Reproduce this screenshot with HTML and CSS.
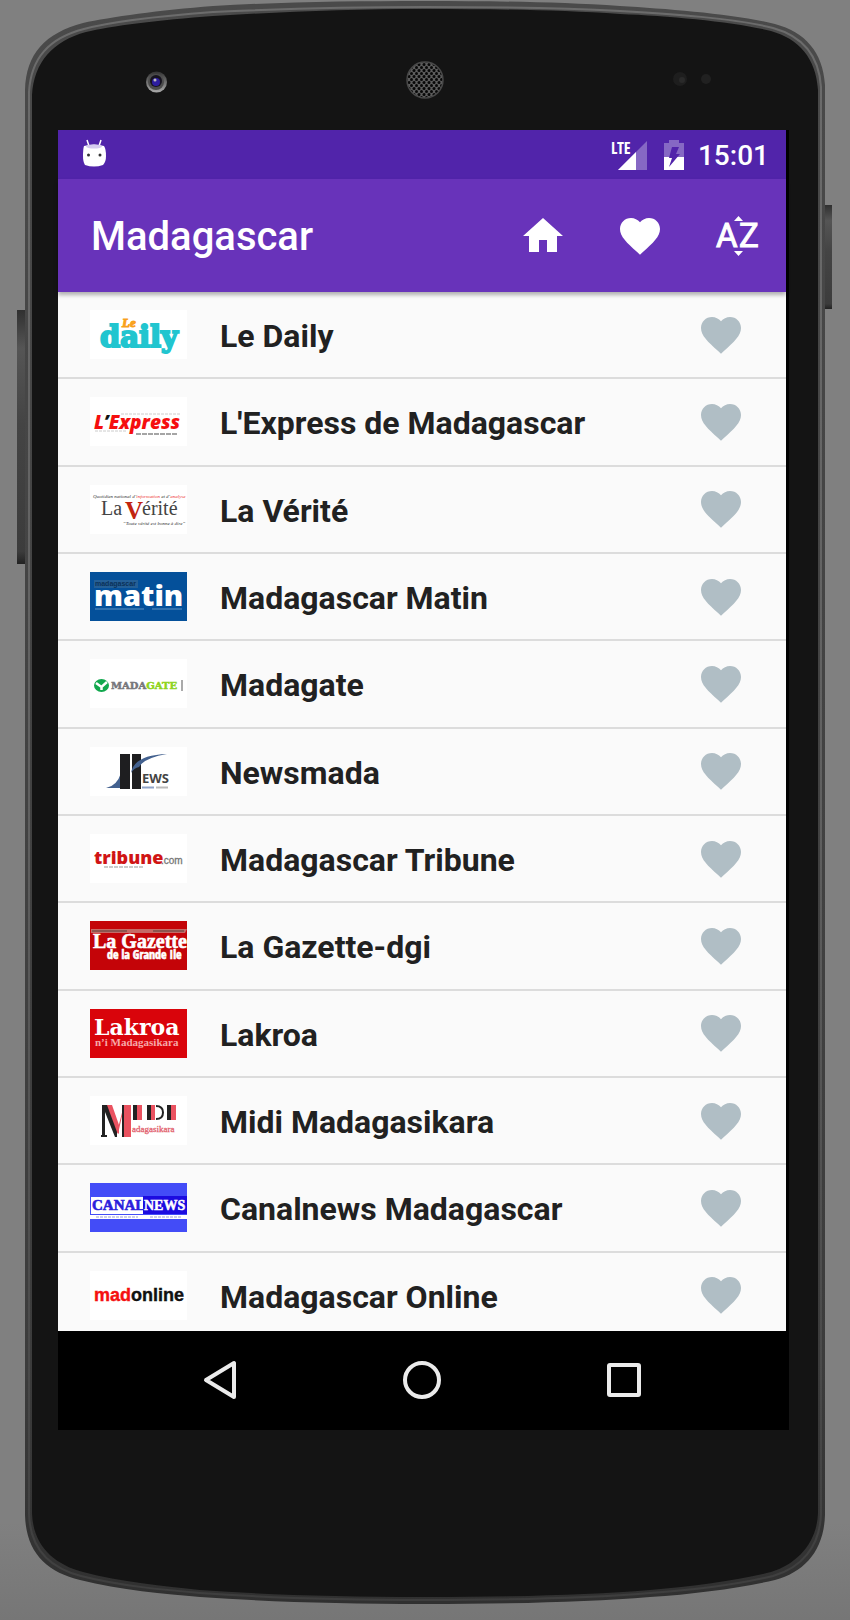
FILE: index.html
```html
<!DOCTYPE html>
<html lang="en">
<head>
<meta charset="utf-8">
<meta name="viewport" content="width=device-width, initial-scale=1">
<title>Madagascar</title>
<link rel="stylesheet" href="styles.css">
</head>
<body>
<svg class="defs" aria-hidden="true">
  <defs>
    <symbol id="heart" viewBox="0 0 24 24"><path d="M12 21.35l-1.45-1.32C5.4 15.36 2 12.28 2 8.5 2 5.42 4.42 3 7.5 3c1.74 0 3.41.81 4.5 2.09C13.09 3.81 14.76 3 16.5 3 19.58 3 22 5.42 22 8.5c0 3.78-3.4 6.86-8.55 11.54L12 21.35z" fill="currentColor"/></symbol>
  </defs>
</svg>
<div class="phone">
  <svg class="phone-body" viewBox="0 0 850 1620" preserveAspectRatio="none" aria-hidden="true">
    <defs>
      <linearGradient id="rim" x1="0" y1="0" x2="0" y2="1">
        <stop offset="0" stop-color="#4a4a4a"/><stop offset=".85" stop-color="#3c3c3c"/><stop offset="1" stop-color="#303030"/>
      </linearGradient>
      <linearGradient id="edge" x1="0" y1="0" x2="0" y2="1">
        <stop offset="0" stop-color="#6c6c6c"/><stop offset=".5" stop-color="#606060"/><stop offset=".85" stop-color="#4a4a4a"/><stop offset="1" stop-color="#3e3e3e"/>
      </linearGradient>
      <linearGradient id="key" x1="0" y1="0" x2="0" y2="1">
        <stop offset="0" stop-color="#303030"/><stop offset=".15" stop-color="#555"/><stop offset=".45" stop-color="#444"/><stop offset=".95" stop-color="#3c3c3c"/><stop offset="1" stop-color="#222"/>
      </linearGradient>
      <linearGradient id="lens" x1="0" y1="0" x2="0" y2="1">
        <stop offset="0" stop-color="#333"/><stop offset="1" stop-color="#aaa"/>
      </linearGradient>
      <pattern id="mesh" width="5" height="6" patternUnits="userSpaceOnUse">
        <rect width="5" height="6" fill="#5c5c5c"/>
        <circle cx="1.5" cy="1.5" r="1.5" fill="#080808"/><circle cx="4" cy="4.5" r="1.5" fill="#080808"/><circle cx="-1" cy="4.5" r="1.5" fill="#080808"/>
      </pattern>
      <linearGradient id="wall" x1="0" y1="0" x2="0" y2="1">
        <stop offset="0" stop-color="#808080"/><stop offset=".94" stop-color="#808080"/><stop offset="1" stop-color="#767676"/>
      </linearGradient>
    </defs>
    <rect width="850" height="1620" fill="url(#wall)"/>
    <rect x="17" y="310" width="10" height="254" fill="url(#key)"/>
    <rect x="824" y="205" width="8" height="104" fill="url(#key)"/>
    <path d="M425 1C350 1 280 2 213 6C160 10 110 17 83 23C45 33 26 54 25 90V1515C26 1553 47 1572 80 1580C120 1590 165 1594 200 1597C270 1602 340 1604 425 1604S590 1602 650 1597C695 1594 740 1588 775 1580C805 1572 824 1550 825 1515V85C823 52 805 32 775 24C735 14 670 9 620 6C560 2 500 1 425 1Z" fill="url(#rim)"/>
    <path d="M425 7C350 7 280 9 213 12C160 16 110 22 84 29C49 38 31 58 29 92V1514C30 1549 50 1568 81 1576C120 1586 165 1590 200 1593C270 1598 340 1600 425 1600S590 1598 650 1593C695 1590 740 1584 773 1576C801 1568 820 1547 821 1514V87C819 55 802 36 773 28C735 18 670 14 620 11C560 8 500 7 425 7Z" fill="none" stroke="url(#edge)" stroke-width="2"/>
    <path d="M425 9C350 9 280 12 213 16C160 20 110 26 86 32C53 41 34 62 32 95V1513C33 1545 53 1564 83 1572C120 1582 165 1586 200 1590C270 1595 340 1597 425 1597S590 1595 650 1590C695 1586 740 1580 771 1572C797 1564 817 1543 818 1513V90C816 58 799 39 771 31C735 22 670 16 620 14C560 10 500 9 425 9Z" fill="#141414"/>
    <circle cx="156.500" cy="82" r="10.500" fill="url(#lens)"/>
    <circle cx="156" cy="82" r="8" fill="#4c4c4c"/>
    <circle cx="156" cy="81" r="6" fill="#16131f"/>
    <circle cx="156" cy="82" r="4" fill="#2d1da0"/>
    <circle cx="155" cy="80" r="1.5" fill="#bbb"/>
    <circle cx="425" cy="80" r="18" fill="url(#mesh)" stroke="#484848" stroke-width="1.5"/>
    <circle cx="680" cy="79" r="7" fill="#1e1e1e"/>
    <circle cx="682" cy="80" r="3" fill="#2a2a2a"/>
    <circle cx="706" cy="79" r="5" fill="#212121"/>
  </svg>
  <div class="screen">
    <div class="status-bar">
      <svg class="robot" viewBox="0 0 24 28" aria-hidden="true">
        <path d="M5 1l2 6M19 1l-2 6" stroke="#fff" stroke-width="1.5"/>
        <path d="M2 7Q12 4 22 7Q24 10 24 17Q24 23 21 26Q12 29 3 26Q1 23 1 17Q1 10 2 7Z" fill="#fff"/>
        <ellipse cx="12" cy="7.5" rx="8" ry="2" fill="#d6ccef"/>
        <circle cx="6.500" cy="16" r="1.5" fill="#333"/><circle cx="18" cy="16" r="1.5" fill="#333"/>
      </svg>
      <svg class="signal" viewBox="0 0 40 34" role="img" aria-label="LTE">
        <path d="M11 32L40 3V32Z" fill="#8668c4"/><path d="M11 32L29 14V32Z" fill="#fff"/>
        <text x="4" y="16" class="lte">LTE</text>
      </svg>
      <svg class="battery" viewBox="0 0 20 30" aria-hidden="true">
        <path d="M5 0H15V3H20V17H0V3H5Z" fill="#8668c4"/><path d="M0 17H20V30H0Z" fill="#fff"/>
        <path d="M8 7H15L12 14H16L5 27L8 18H5Z" fill="#5124aa"/>
      </svg>
      <time class="clock">15:01</time>
    </div>
    <header class="toolbar">
      <h1 class="title">Madagascar</h1>
      <button class="tool" aria-label="Home"><svg class="icon" viewBox="0 0 24 24"><path d="M10 20v-6h4v6h5v-8h3L12 3 2 12h3v8z" fill="currentColor"/></svg></button>
      <button class="tool" aria-label="Favourites"><svg class="icon"><use href="#heart"/></svg></button>
      <button class="tool" aria-label="Sort A to Z"><svg class="icon" viewBox="0 0 48 48"><path d="M21 9L25.500 4L30 9ZM21 39L25.500 44L30 39Z" fill="currentColor"/><text x="3" y="35" class="az">A</text><text x="26" y="35" class="az">Z</text></svg></button>
    </header>
    <main class="scroller">
      <ul class="papers">
        <li class="paper">
          <svg class="logo" viewBox="0 0 97 49" aria-hidden="true"><rect width="97" height="49" fill="#fff"/><text x="10" y="37" class="slab" font-size="29" fill="#21c5cf" stroke="#21c5cf" stroke-width="2">daily</text><text x="32" y="17" class="serif-i" font-size="13" fill="#f9a11b" stroke="#f9a11b">Le</text></svg>
          <span class="name">Le Daily</span>
          <button class="fav" aria-label="Favourite Le Daily"><svg class="icon"><use href="#heart"/></svg></button>
        </li>
        <li class="paper">
          <svg class="logo" viewBox="0 0 97 49" aria-hidden="true"><rect width="97" height="49" fill="#fff"/><path d="M31 17H91M5 34H37" stroke="#ccc" stroke-dasharray="3 1"/><path d="M46 37H88" stroke="#888" stroke-width="1.5" stroke-dasharray="5 1"/><text x="4" y="32" class="open-i" font-size="19" fill="#f50f0f">L<tspan fill="#111">’</tspan>Express</text></svg>
          <span class="name">L'Express de Madagascar</span>
          <button class="fav" aria-label="Favourite L'Express de Madagascar"><svg class="icon"><use href="#heart"/></svg></button>
        </li>
        <li class="paper">
          <svg class="logo" viewBox="0 0 97 49" aria-hidden="true"><rect width="97" height="49" fill="#fff"/><text x="3" y="13" class="serif-l" font-size="5" fill="#333">Quotidien national d’<tspan fill="#e33">information</tspan> et d’<tspan fill="#e33">analyse</tspan></text><text x="11" y="30" class="serif" font-size="20" fill="#444">La</text><text x="35" y="34" class="serif-b" font-size="25" fill="#c2240f">V</text><text x="52" y="30" class="serif" font-size="20" fill="#444">érité</text><text x="33" y="40" class="serif-l" font-size="5" fill="#333">“Toute vérité est bonne à dire”</text></svg>
          <span class="name">La Vérité</span>
          <button class="fav" aria-label="Favourite La Vérité"><svg class="icon"><use href="#heart"/></svg></button>
        </li>
        <li class="paper">
          <svg class="logo" viewBox="0 0 97 49" aria-hidden="true"><rect width="97" height="49" fill="#04509a"/><rect x="4" y="8" width="44" height="8" fill="#245f96"/><text x="5" y="14" class="sans-b" font-size="7" fill="#0b3158">madagascar</text><text x="4" y="34" class="open-x" font-size="29" fill="#fff">matin</text><path d="M5 37H54M62 37H92" stroke="#5f93c4"/></svg>
          <span class="name">Madagascar Matin</span>
          <button class="fav" aria-label="Favourite Madagascar Matin"><svg class="icon"><use href="#heart"/></svg></button>
        </li>
        <li class="paper">
          <svg class="logo" viewBox="0 0 97 49" aria-hidden="true"><rect width="97" height="49" fill="#fff"/><ellipse cx="11.500" cy="26.500" rx="7.500" ry="6.500" fill="#12a84e"/><path d="M6 24L11.500 28L17 23M11.500 27V31" stroke="#fff" stroke-width="2.500" fill="none"/><text x="21" y="30" class="slab" font-size="10" fill="#77777b" stroke="#77777b" stroke-width=".5">MADA<tspan fill="#8fd420" stroke="#8fd420">GATE</tspan></text><rect x="91" y="21" width="2" height="11" fill="#aaa"/></svg>
          <span class="name">Madagate</span>
          <button class="fav" aria-label="Favourite Madagate"><svg class="icon"><use href="#heart"/></svg></button>
        </li>
        <li class="paper">
          <svg class="logo" viewBox="0 0 97 49" aria-hidden="true"><rect width="97" height="49" fill="#fff"/><path d="M16 41Q27 39 31 26V41Z" fill="#43618f"/><rect x="30" y="7" width="10" height="35" fill="#1e1e20"/><rect x="42" y="7" width="9" height="35" fill="#1e1e20"/><path d="M41 26Q44 8 77 7Q54 11 49 20Q44 21 41 26Z" fill="#43618f"/><text x="52" y="36" class="open-b" font-size="13" fill="#444">EWS</text><path d="M52 40.500H64" stroke="#8fa3c8" stroke-width="2"/><path d="M66 40.500H78" stroke="#bbb" stroke-width="2"/></svg>
          <span class="name">Newsmada</span>
          <button class="fav" aria-label="Favourite Newsmada"><svg class="icon"><use href="#heart"/></svg></button>
        </li>
        <li class="paper">
          <svg class="logo" viewBox="0 0 97 49" aria-hidden="true"><rect width="97" height="49" fill="#fff"/><text x="4" y="30" class="open-x" font-size="18" fill="#d01515">tribune</text><text x="71" y="30" class="sans" font-size="10" fill="#777" stroke="#777" stroke-width=".3">.com</text><path d="M14 33H53" stroke="#bbb" stroke-width="1.500" stroke-dasharray="4 1"/></svg>
          <span class="name">Madagascar Tribune</span>
          <button class="fav" aria-label="Favourite Madagascar Tribune"><svg class="icon"><use href="#heart"/></svg></button>
        </li>
        <li class="paper">
          <svg class="logo" viewBox="0 0 97 49" aria-hidden="true"><rect width="97" height="49" fill="#c40408"/><path d="M1 8H97L95 12H1Z" fill="#c66a66"/><path d="M2 10H37M63 10H94" stroke="#8d5550" stroke-width="2"/><text x="3" y="27" class="serif-b" font-size="20" fill="#fff" stroke="#fff" stroke-width=".6">La Gazette</text><text x="17" y="38" class="narrow" font-size="12" fill="#fff" stroke="#fff" stroke-width=".6">de la Grande Ile</text></svg>
          <span class="name">La Gazette-dgi</span>
          <button class="fav" aria-label="Favourite La Gazette-dgi"><svg class="icon"><use href="#heart"/></svg></button>
        </li>
        <li class="paper">
          <svg class="logo" viewBox="0 0 97 49" aria-hidden="true"><rect width="97" height="49" fill="#d9040b"/><text x="4" y="26" class="dserif" font-size="22" fill="#fff">Lakroa</text><text x="5" y="37" class="serif-b" font-size="11" fill="#f6a9a9">n’i Madagasikara</text></svg>
          <span class="name">Lakroa</span>
          <button class="fav" aria-label="Favourite Lakroa"><svg class="icon"><use href="#heart"/></svg></button>
        </li>
        <li class="paper">
          <svg class="logo" viewBox="0 0 97 49" aria-hidden="true"><rect width="97" height="49" fill="#fff"/><path d="M12 9H20L27 28V41H25L15 16V39H17V41H11V39H12Z" fill="#222"/><path d="M17 9H22L29 29V38L27 36Z" fill="#ea5260"/><path d="M27 36L34 9H41V41H32V20L28 38Z" fill="#ea5260"/><path d="M33 9V41" stroke="#222" stroke-width="2"/><path d="M43 9H47V24H43ZM57 9H61V24H57ZM77 9H81V24H77Z" fill="#222"/><path d="M47 9H52V24H47ZM61 9H65V24H61ZM81 9H86V24H81Z" fill="#ea5260"/><path d="M66 10Q73 10 73 16.500T66 23" stroke="#222" stroke-width="2" fill="none"/><text x="42" y="36" class="serif" font-size="9" fill="#e2606c" stroke="#e2606c" stroke-width=".3">adagasikara</text></svg>
          <span class="name">Midi Madagasikara</span>
          <button class="fav" aria-label="Favourite Midi Madagasikara"><svg class="icon"><use href="#heart"/></svg></button>
        </li>
        <li class="paper">
          <svg class="logo" viewBox="0 0 97 49" aria-hidden="true"><rect width="97" height="49" fill="#434cf7"/><rect x="53" y="13" width="44" height="18" fill="#1c0be0"/><path d="M1 14H53V31H1Z" fill="#fff"/><path d="M0 32H97V36H0Z" fill="#fff"/><path d="M6 34H48M60 34H91" stroke="#9a9ad8" stroke-dasharray="3 1"/><text x="2" y="27" class="serif-b" font-size="15" fill="#2b20dc" stroke="#2b20dc" stroke-width=".6">CANAL</text><text x="54" y="27" class="serif-b" font-size="14" fill="#fff" stroke="#fff" stroke-width=".5">NEWS</text></svg>
          <span class="name">Canalnews Madagascar</span>
          <button class="fav" aria-label="Favourite Canalnews Madagascar"><svg class="icon"><use href="#heart"/></svg></button>
        </li>
        <li class="paper">
          <svg class="logo" viewBox="0 0 97 49" aria-hidden="true"><rect width="97" height="49" fill="#fff"/><text x="4" y="30" class="sans-b" font-size="18" fill="#f51010" stroke="#f51010" stroke-width=".4">mad<tspan fill="#111" stroke="#111">online</tspan></text></svg>
          <span class="name">Madagascar Online</span>
          <button class="fav" aria-label="Favourite Madagascar Online"><svg class="icon"><use href="#heart"/></svg></button>
        </li>
      </ul>
    </main>
    <nav class="nav-bar">
      <button class="nav-key" aria-label="Back"><svg class="icon" viewBox="0 0 48 48"><path d="M10 24L38 7V41Z" fill="none" stroke="#ebebeb" stroke-width="4" stroke-linejoin="round"/></svg></button>
      <button class="nav-key" aria-label="Home screen"><svg class="icon" viewBox="0 0 48 48"><circle cx="24" cy="24" r="17" fill="none" stroke="#ebebeb" stroke-width="4"/></svg></button>
      <button class="nav-key" aria-label="Recent apps"><svg class="icon" viewBox="0 0 48 48"><rect x="9" y="9" width="30" height="30" rx="1" fill="none" stroke="#ebebeb" stroke-width="4"/></svg></button>
    </nav>
  </div>
</div>
</body>
</html>
```

FILE: styles.css
```css
* { box-sizing: border-box; }
body { margin: 0; background: #808080; font-family: Roboto, "Liberation Sans", sans-serif; }
button { padding: 0; border: 0; background: none; color: inherit; display: grid; place-items: center; }
.defs { position: absolute; width: 0; height: 0; }

.phone { position: relative; display: flex; height: 100vh; padding: 130px 61px 190px 58px; }
.phone-body { position: absolute; inset: 0; width: 100%; height: 100%; }
.screen { position: relative; flex: 1; min-width: 0; display: flex; flex-direction: column; background: #000; }
.icon { display: block; width: 48px; height: 48px; }

.status-bar { display: flex; align-items: center; height: 49px; margin-right: 3px; padding: 0 17px 0 24px; background: #5124aa; color: #fff; }
.robot { width: 24px; height: 28px; margin: 0 auto 4px 0; }
.signal { width: 40px; height: 34px; margin-right: 17px; }
.battery { width: 20px; height: 30px; margin-right: 14px; }
.clock { padding-top: 2px; font-size: 28px; line-height: 32px; font-weight: 500; }
.lte { font: bold 16px "Liberation Sans Narrow", "Open Sans Condensed", Roboto, sans-serif; fill: #fff; }

.toolbar { position: relative; z-index: 1; display: flex; align-items: center; gap: 49px; height: 113px; margin-right: 3px; padding: 0 25px 0 33px; background: #6833ba; color: #fff; box-shadow: 0 3px 4px rgba(0, 0, 0, .3); }
.title { flex: 1; margin: 0; padding-top: 2px; font-size: 40px; line-height: 48px; font-weight: 500; }
.az { font: 33px Roboto, sans-serif; fill: currentColor; stroke: currentColor; stroke-width: 1px; }

.scroller { flex: 1; min-height: 0; margin-right: 3px; overflow: hidden; background: #fafafa; }
.papers { display: grid; grid-auto-rows: 1fr; min-height: 1048px; margin: 0; padding: 0; list-style: none; }
.paper { display: flex; align-items: center; padding: 0 41px 0 32px; border-bottom: 2px solid #dcdcdc; }
.logo { flex: none; width: 97px; height: 49px; margin-right: 33px; }
.name { flex: 1; padding-top: 3px; font-size: 32px; line-height: 40px; font-weight: 700; color: #212121; }
.fav { color: #b0bec5; }

.nav-bar { display: grid; grid-template-columns: repeat(3, 1fr); align-items: center; height: 99px; padding: 0 64px 2px 61px; }

.sans { font-family: "Liberation Sans", sans-serif; }
.sans-b { font-family: "Liberation Sans", sans-serif; font-weight: 700; }
.serif { font-family: "Liberation Serif", serif; }
.serif-b { font-family: "Liberation Serif", serif; font-weight: 700; }
.serif-i { font-family: "Liberation Serif", serif; font-weight: 700; font-style: italic; }
.serif-l { font-family: "Liberation Serif", serif; font-style: italic; }
.dserif { font-family: "DejaVu Serif", serif; font-weight: 700; }
.slab { font-family: "DejaVu Serif", serif; font-weight: 700; }
.open-b { font-family: "Open Sans", sans-serif; font-weight: 700; }
.open-i { font-family: "Open Sans", sans-serif; font-weight: 800; font-style: italic; }
.open-x { font-family: "Open Sans", sans-serif; font-weight: 800; }
.narrow { font-family: "Open Sans Condensed", "Liberation Sans Narrow", "Liberation Sans", sans-serif; font-weight: 700; }
```
